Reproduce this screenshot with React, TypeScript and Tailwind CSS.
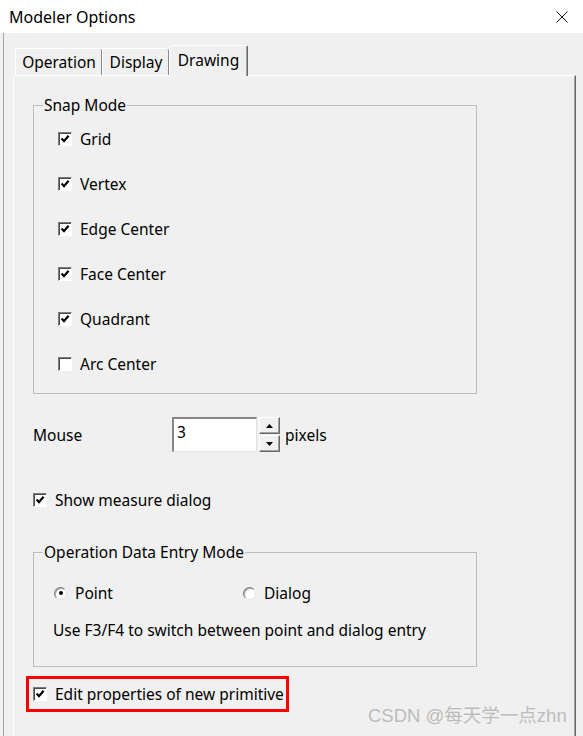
import React from "react";

function CheckBox({ checked }: { checked: boolean }) {
  return (
    <span className="flex h-[14px] w-[14px] shrink-0 items-center justify-center border border-t-[#7c7c7c] border-l-[#7c7c7c] border-r-white border-b-white bg-white shadow-[inset_1px_1px_0_#4a4a4a]">
      {checked && (
        <svg width="10" height="10" viewBox="0 0 10 10">
          <path d="M1.6 4.6 L4 7.2 L8.6 1.8" fill="none" stroke="#000" strokeWidth="2.2" />
        </svg>
      )}
    </span>
  );
}

function Radio({ checked }: { checked: boolean }) {
  return (
    <span className="flex h-[13px] w-[13px] shrink-0 items-center justify-center rounded-full border border-t-[#7c7c7c] border-l-[#7c7c7c] border-r-[#e6e6e6] border-b-[#e6e6e6] bg-white shadow-[inset_1px_1px_0_#a8a8a8]">
      {checked && <span className="h-[4px] w-[4px] rounded-full bg-black" />}
    </span>
  );
}

function CheckRow({ label, checked }: { label: string; checked: boolean }) {
  return (
    <div className="flex h-[20px] items-center gap-[8px]">
      <CheckBox checked={checked} />
      <span>{label}</span>
    </div>
  );
}

const snapItems = [
  { label: "Grid", checked: true },
  { label: "Vertex", checked: true },
  { label: "Edge Center", checked: true },
  { label: "Face Center", checked: true },
  { label: "Quadrant", checked: true },
  { label: "Arc Center", checked: false },
];

export default function App() {
  return (
    <div className="relative flex h-[736px] w-[583px] flex-col overflow-hidden bg-[#f0f0f0] font-['Noto_Sans',sans-serif] text-[15.5px] leading-[20px] text-black">
      {/* title bar */}
      <div className="flex h-[33px] shrink-0 items-center justify-between bg-white pl-[9px] pr-[15px]">
        <span className="text-[16px]">Modeler Options</span>
        <svg width="12" height="12" viewBox="0 0 12 12">
          <path d="M0.5 0.5 L11.5 11.5 M11.5 0.5 L0.5 11.5" stroke="#111" strokeWidth="1" />
        </svg>
      </div>

      <div className="ml-[3px] flex flex-1 flex-col border-l border-[#a4a4a4] pt-[12px]">
        {/* tabs */}
        <div className="ml-[11px] flex h-[30px] items-end">
          <div className="flex h-[27px] w-[87px] items-center justify-center rounded-t-[2px] border-l border-t border-white shadow-[inset_-1px_0_0_#8a8a8a]">
            Operation
          </div>
          <div className="flex h-[27px] w-[67px] items-center justify-center rounded-t-[2px] border-l border-t border-white shadow-[inset_-1px_0_0_#8a8a8a]">
            Display
          </div>
          <div className="relative z-10 -mb-px flex h-[31px] w-[79px] items-center justify-center rounded-t-[2px] border-l border-t border-r border-l-white border-t-white border-r-[#696969] bg-[#f0f0f0] pb-[2px] shadow-[inset_-1px_0_0_#a0a0a0]">
            Drawing
          </div>
        </div>

        {/* tab panel */}
        <div className="ml-[9px] flex w-[563px] flex-1 flex-col border-l border-t border-r border-l-white border-t-white border-r-[#696969] shadow-[inset_-1px_0_0_#a0a0a0]">
          <fieldset className="ml-[19px] mt-[19px] w-[444px] border border-[#bdbdbd] pb-[19px] pl-[24px]">
            <legend className="ml-[-15px] px-[1px]">Snap Mode</legend>
            <div className="flex flex-col gap-[25px] pt-[14px]">
              {snapItems.map((item) => (
                <CheckRow key={item.label} label={item.label} checked={item.checked} />
              ))}
            </div>
          </fieldset>

          <div className="ml-[19px] mt-[23px] flex h-[35px] items-center">
            <span className="w-[139px]">Mouse</span>
            <div className="flex h-[35px] w-[85px] items-start border-b border-r border-l-2 border-t-2 border-b-[#e2e2e2] border-r-[#e2e2e2] border-l-[#868686] border-t-[#868686] bg-white pl-[3px] pt-[3px]">
              3
            </div>
            <div className="ml-[2px] flex h-[35px] w-[21px] flex-col gap-[1px]">
              <div className="flex flex-1 items-center justify-center border-b border-l border-r border-t border-b-[#696969] border-l-white border-r-[#696969] border-t-white shadow-[inset_-1px_-1px_0_#a0a0a0]">
                <svg width="7" height="4" viewBox="0 0 7 4">
                  <path d="M0 4 L3.5 0 L7 4 Z" fill="#000" />
                </svg>
              </div>
              <div className="flex flex-1 items-center justify-center border-b border-l border-r border-t border-b-[#696969] border-l-white border-r-[#696969] border-t-white shadow-[inset_-1px_-1px_0_#a0a0a0]">
                <svg width="7" height="4" viewBox="0 0 7 4">
                  <path d="M0 0 L7 0 L3.5 4 Z" fill="#000" />
                </svg>
              </div>
            </div>
            <span className="ml-[5px]">pixels</span>
          </div>

          <div className="ml-[19px] mt-[38px]">
            <CheckRow label="Show measure dialog" checked />
          </div>

          <fieldset className="ml-[19px] mt-[32px] w-[444px] border border-[#bdbdbd] pb-[26px] pl-[20px]">
            <legend className="ml-[-11px] px-[1px]">Operation Data Entry Mode</legend>
            <div className="mt-[21px] flex h-[20px] items-center">
              <div className="flex w-[189px] items-center gap-[8px]">
                <Radio checked />
                <span>Point</span>
              </div>
              <div className="flex items-center gap-[8px]">
                <Radio checked={false} />
                <span>Dialog</span>
              </div>
            </div>
            <div className="ml-[-1px] mt-[17px] h-[20px]">
              Use F3/F4 to switch between point and dialog entry
            </div>
          </fieldset>

          <div className="ml-[12px] mt-[9px] flex h-[36px] w-[263px] items-center gap-[8px] border-[3px] border-[#ff0000] pl-[4px]">
            <CheckBox checked />
            <span>Edit properties of new primitive</span>
          </div>
        </div>
      </div>

      {/* watermark */}
      <span className="absolute left-[368px] top-[704px] font-['Liberation_Sans','Noto_Sans_CJK_SC',sans-serif] text-[18.5px] leading-[24px] text-[#bcbcbc]">
        CSDN @每天学一点zhn
      </span>
    </div>
  );
}
